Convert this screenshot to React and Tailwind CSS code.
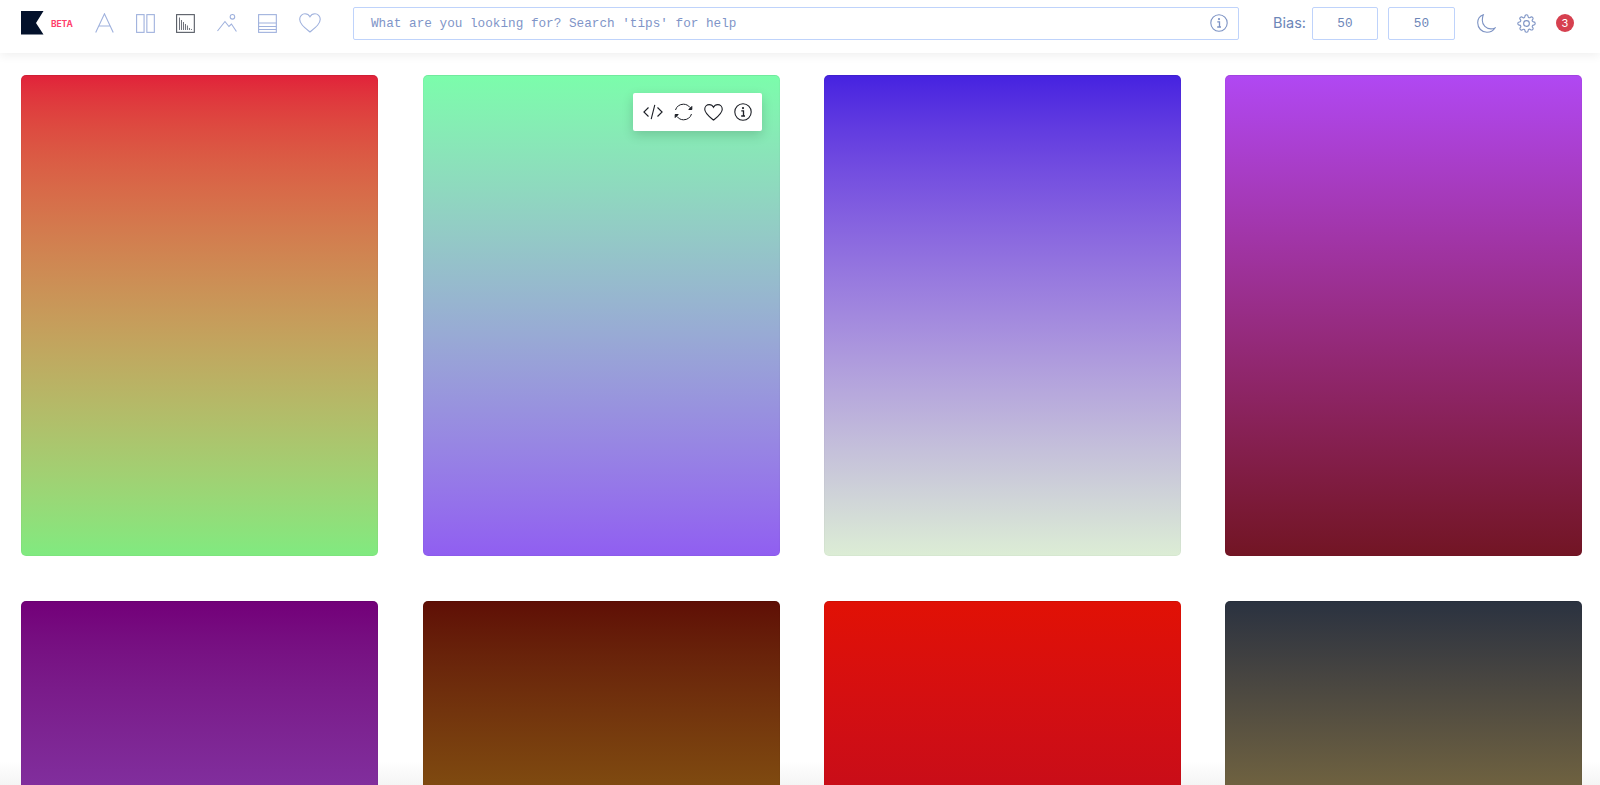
import React from "react";

const ic = "#9fb1dd";

function Logo() {
  return (
    <svg width="23" height="24" viewBox="0 0 23 24" className="shrink-0">
      <path d="M0 0H22.500L15 12L22.500 23.500H0Z" fill="#03112b" />
    </svg>
  );
}

const NavA = () => (
  <svg width="19" height="20" viewBox="0 0 19 20" fill="none" stroke={ic} strokeWidth="1.100">
    <path d="M0.700 19.500L9.500 0.800L18.300 19.500M3.800 13H15.200" />
  </svg>
);
const NavCols = () => (
  <svg width="19" height="19" viewBox="0 0 19 19" fill="none" stroke={ic} strokeWidth="1.100">
    <rect x="0.600" y="0.600" width="7.500" height="17.800" />
    <rect x="10.900" y="0.600" width="7.500" height="17.800" />
  </svg>
);
const NavChart = () => (
  <svg width="19" height="19" viewBox="0 0 19 19" fill="none">
    <rect x="0.600" y="0.600" width="17.800" height="17.800" stroke="#555a63" strokeWidth="1.100" />
    <path d="M3.500 16V3.500M5.500 16V6M7.500 16V8M9.500 16V10M11.500 16V11.500M13.500 16V14M15.500 16V15" stroke="#6d7079" strokeWidth="1" />
  </svg>
);
const NavMountain = () => (
  <svg width="20" height="19" viewBox="0 0 20 19" fill="none" stroke={ic} strokeWidth="1.100">
    <path d="M0.500 17L8 7.500L12 12.500L14.500 10L19.500 17.500" />
    <circle cx="15.500" cy="2.800" r="2.300" />
  </svg>
);
const NavRows = () => (
  <svg width="19" height="19" viewBox="0 0 19 19" fill="none" stroke={ic} strokeWidth="1.100">
    <rect x="0.600" y="0.600" width="17.800" height="17.800" />
    <path d="M0.600 9H18.400M0.600 12.500H18.400M0.600 15.500H18.400" />
  </svg>
);
const NavHeart = () => (
  <svg width="22" height="20" viewBox="0 0 22 20" fill="none" stroke={ic} strokeWidth="1.100">
    <path d="M11 19C5.500 14.500 0.700 11 0.700 6.200C0.700 3 3.200 0.700 6 0.700C8 0.700 10 1.800 11 3.800C12 1.800 14 0.700 16 0.700C18.800 0.700 21.300 3 21.300 6.200C21.300 11 16.500 14.500 11 19Z" />
  </svg>
);

const Info = ({ color, size = 18 }) => (
  <svg width={size} height={size} viewBox="0 0 18 18" fill="none" className="shrink-0">
    <circle cx="9" cy="9" r="8.200" stroke={color} strokeWidth="1.100" />
    <circle cx="9" cy="5.100" r="1.100" fill={color} />
    <path d="M7.300 7.900H9.500V12.900M7.200 13H11" stroke={color} strokeWidth="1.300" />
  </svg>
);

const Moon = () => (
  <svg width="19" height="19" viewBox="0 0 19 19" fill="none" stroke="#7d93c4" strokeWidth="1.100" className="shrink-0">
    <path d="M6.300 0.800C3 2 0.700 5 0.700 8.800C0.700 14 4.800 18.300 10 18.300C13.300 18.300 16.300 16.600 18 14C16.800 14.600 15.500 14.900 14 14.900C9.200 14.900 5.300 11 5.300 6.200C5.300 4.300 5.600 2.500 6.300 0.800Z" />
  </svg>
);

const Gear = () => (
  <svg width="19" height="19" viewBox="0 0 24 24" fill="none" stroke="#7d93c4" strokeWidth="1.400" className="shrink-0">
    <circle cx="12" cy="12" r="3.600" />
    <path d="M19.400 15a1.650 1.650 0 0 0 .33 1.820l.06.06a2 2 0 1 1-2.830 2.830l-.06-.06a1.650 1.650 0 0 0-1.820-.33 1.650 1.650 0 0 0-1 1.510V21a2 2 0 1 1-4 0v-.09A1.650 1.650 0 0 0 9 19.400a1.650 1.650 0 0 0-1.820.33l-.06.06a2 2 0 1 1-2.830-2.830l.06-.06a1.650 1.650 0 0 0 .33-1.820 1.650 1.650 0 0 0-1.510-1H3a2 2 0 1 1 0-4h.09A1.650 1.650 0 0 0 4.600 9a1.650 1.650 0 0 0-.33-1.820l-.06-.06a2 2 0 1 1 2.830-2.830l.06.06a1.650 1.650 0 0 0 1.820.33H9a1.650 1.650 0 0 0 1-1.510V3a2 2 0 1 1 4 0v.09a1.650 1.650 0 0 0 1 1.510 1.650 1.650 0 0 0 1.820-.33l.06-.06a2 2 0 1 1 2.830 2.830l-.06.06a1.650 1.650 0 0 0-.33 1.820V9a1.650 1.650 0 0 0 1.510 1H21a2 2 0 1 1 0 4h-.09a1.650 1.650 0 0 0-1.510 1Z" />
  </svg>
);

const Code = () => (
  <svg width="20" height="16" viewBox="0 0 20 16" fill="none" stroke="#1c1f26" strokeWidth="1.100">
    <path d="M5.500 3.500L0.900 8L5.500 12.500M14.500 3.500L19.100 8L14.500 12.500M11.800 0.800L8.200 15.200" />
  </svg>
);
const Sync = () => (
  <svg width="19" height="18" viewBox="0 0 19 18" fill="none" stroke="#1c1f26" strokeWidth="1">
    <path d="M1.500 7C2.500 3.500 5.500 1.200 9.500 1.200C12 1.200 14.500 2.400 16 4.500" />
    <path d="M17.500 11C16.500 14.500 13.500 16.800 9.500 16.800C7 16.800 4.500 15.600 3 13.500" />
    <path d="M17.800 3.500V6.500H14.800Z" fill="#1c1f26" />
    <path d="M1.200 14.500V11.500H4.200Z" fill="#1c1f26" />
  </svg>
);
const Heart = () => (
  <svg width="19" height="17" viewBox="0 0 22 20" fill="none" stroke="#1c1f26" strokeWidth="1.300">
    <path d="M11 19C5.500 14.500 0.700 11 0.700 6.200C0.700 3 3.200 0.700 6 0.700C8 0.700 10 1.800 11 3.800C12 1.800 14 0.700 16 0.700C18.800 0.700 21.300 3 21.300 6.200C21.300 11 16.500 14.500 11 19Z" />
  </svg>
);

function Toolbar() {
  return (
    <div className="absolute top-[18px] right-[18px] flex h-[38px] w-[129px] items-center justify-center gap-[11px] rounded-[2px] bg-white shadow-[0_4px_12px_rgba(0,0,0,0.16)]">
      <Code />
      <Sync />
      <Heart />
      <Info color="#1c1f26" />
    </div>
  );
}

const cards = [
  "bg-[linear-gradient(in_lab,#e1213a,#80ea80)]",
  "bg-[linear-gradient(in_lab,#7bfdab,#905ef1)]",
  "bg-[linear-gradient(in_lab,#4522e0,#dcedd5)]",
  "bg-[linear-gradient(in_lab,#b048f3,#721524)]",
  "bg-[linear-gradient(in_lab,#730079,#812e9d_38.5%,#812e9d)]",
  "bg-[linear-gradient(in_lab,#5f0e05,#7f4a10_38.5%,#7f4a10)]",
  "bg-[linear-gradient(in_lab,#e11105,#c90d18_38.5%,#c90d18)]",
  "bg-[linear-gradient(in_lab,#2a3240,#6f6240_38.5%,#6f6240)]",
];

export default function App() {
  return (
    <div className="relative h-[785px] w-[1600px] overflow-hidden bg-white font-['Inter',sans-serif]">
      <div className="absolute bottom-0 left-0 right-0 h-[24px] bg-[linear-gradient(rgba(240,240,240,0),rgba(240,240,240,0.7))]" />
      <header className="relative z-10 flex h-[53px] items-center bg-white pb-[7px] pl-[21px] shadow-[0_2px_10px_rgba(0,0,0,0.07)]">
        <Logo />
        <span className="ml-[7px] mt-[3px] w-[22px] text-[8.500px] font-bold tracking-[-0.1px] text-[#ff3f6c]">BETA</span>
        <nav className="ml-[22px] flex w-[226px] items-center gap-[21.700px]">
          <NavA />
          <NavCols />
          <NavChart />
          <NavMountain />
          <NavRows />
          <NavHeart />
        </nav>
        <div className="ml-[32px] flex h-[33px] w-[886px] items-center justify-between rounded-[2px] border border-[#bfd3fb] pl-[17px] pr-[10px]">
          <span className="pt-[2px] font-['Liberation_Mono',monospace] text-[12.700px] text-[#7f95c8]">What are you looking for? Search 'tips' for help</span>
          <Info color="#7d93c4" />
        </div>
        <span className="ml-[34px] text-[14.500px] text-[#6c86b8]">Bias:</span>
        <div className="ml-[6px] flex h-[33px] w-[66px] items-center justify-center rounded-[2px] border border-[#bfd3fb] pt-[2px] font-['Liberation_Mono',monospace] text-[12.700px] text-[#6c86b8]">50</div>
        <div className="ml-[10px] flex h-[33px] w-[67px] items-center justify-center rounded-[2px] border border-[#bfd3fb] pt-[2px] font-['Liberation_Mono',monospace] text-[12.700px] text-[#6c86b8]">50</div>
        <div className="ml-[22px] flex items-center gap-[21px]">
          <Moon />
          <Gear />
        </div>
        <div className="ml-[20px] flex h-[18px] w-[18px] items-center justify-center rounded-full bg-[#d6404f] text-[11px] text-white">3</div>
      </header>
      <main className="relative grid grid-cols-4 gap-x-[44.330px] gap-y-[45px] pl-[21.300px] pr-[17.700px] pt-[22px]">
        {cards.map((c, i) => (
          <div key={c} className={`relative h-[481px] rounded-[5px] shadow-[inset_0_1px_0_rgba(0,0,0,0.05),inset_0_0_0_1px_rgba(0,0,0,0.025)] ${c}`}>
            {i === 1 && <Toolbar />}
          </div>
        ))}
      </main>
    </div>
  );
}
